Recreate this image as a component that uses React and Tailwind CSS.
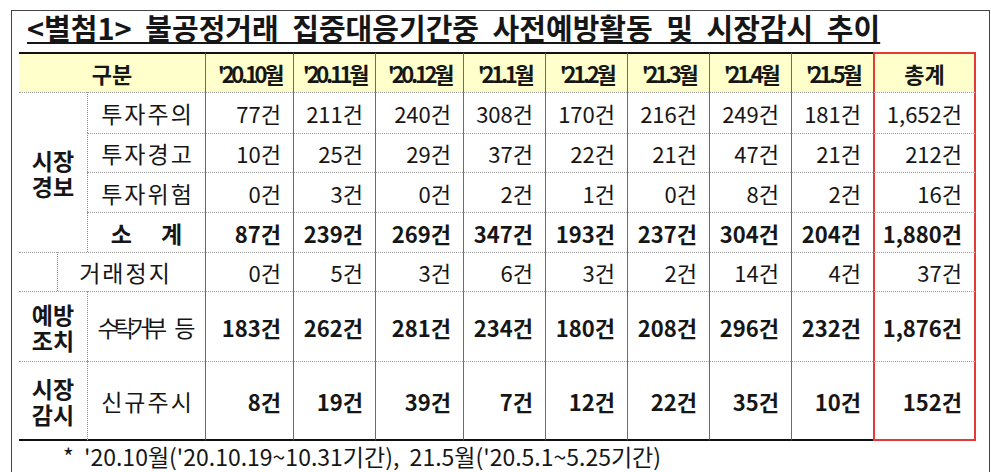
const rows = [
  ['77건', '211건', '240건', '308건', '170건', '216건', '249건', '181건', '1,652건'],
  ['10건', '25건', '29건', '37건', '22건', '21건', '47건', '21건', '212건'],
  ['0건', '3건', '0건', '2건', '1건', '0건', '8건', '2건', '16건'],
];
const subtotal = ['87건', '239건', '269건', '347건', '193건', '237건', '304건', '204건', '1,880건'];
const halt = ['0건', '5건', '3건', '6건', '3건', '2건', '14건', '4건', '37건'];
const prevent = ['183건', '262건', '281건', '234건', '180건', '208건', '296건', '232건', '1,876건'];
const watch = ['8건', '19건', '39건', '7건', '12건', '22건', '35건', '10건', '152건'];
const months = ["'20.10월", "'20.11월", "'20.12월", "'21.1월", "'21.2월", "'21.3월", "'21.4월", "'21.5월"];

const dotTop = 'border-t border-t-[#9a9a9a] [border-top-style:dotted]';
const dotLeft = 'border-l border-l-[#888] [border-left-style:dotted]';
const numCell = `text-right pr-[12px] border-l border-l-[#6b6b6b] ${dotTop}`;
const totalCell = `text-right pr-[12px] border-l-2 border-r-2 border-l-[#e53935] border-r-[#e53935] ${dotTop}`;
const numLast = `text-right pr-[12px] border-l border-l-[#6b6b6b] border-b-2 border-b-[#111] ${dotTop}`;
const totalLast = `text-right pr-[12px] border-l-2 border-r-2 border-b-2 border-l-[#e53935] border-r-[#e53935] border-b-[#e53935] ${dotTop}`;
const labelText = 'text-[23px] tracking-[2px] pl-[2px]';

function Values({ values, bold, last }) {
  return values.map((v, i) => {
    const isTotal = i === values.length - 1;
    let cls;
    if (last) cls = isTotal ? totalLast : numLast;
    else cls = isTotal ? totalCell : numCell;
    return (
      <td key={i} className={`${cls} ${bold ? 'font-bold' : ''}`}>
        {v}
      </td>
    );
  });
}

export default function App() {
  return (
    <div className="w-[991px] h-[472px] overflow-hidden bg-white text-[#161616] font-['Noto_Sans_CJK_KR',sans-serif]">
      <div className="ml-[11px] mt-[10px] w-[979px] h-[480px] border-l border-t border-r border-[#444]">
        <div className="pl-[15px] pt-[1px] text-[29px] leading-[31px] font-bold [word-spacing:7px]">
          <span className="underline decoration-2 underline-offset-[2px]">
            &lt;별첨1&gt; 불공정거래 집중대응기간중 사전예방활동 및 시장감시 추이
          </span>
        </div>

        <table className="ml-[7px] mt-[9px] w-[957px] table-fixed border-separate border-spacing-0 text-[22px] leading-[28px]">
          <colgroup>
            <col className="w-[38px]" />
            <col className="w-[30px]" />
            <col className="w-[118px]" />
            <col className="w-[88px]" />
            <col className="w-[82px]" />
            <col className="w-[88px]" />
            <col className="w-[82px]" />
            <col className="w-[82px]" />
            <col className="w-[82px]" />
            <col className="w-[82px]" />
            <col className="w-[82px]" />
            <col className="w-[103px]" />
          </colgroup>
          <tbody>
            <tr className="h-[40px] bg-[#ffffcc] font-bold">
              <td colSpan={3} className="text-center border-t-2 border-t-[#111]">구분</td>
              {months.map((m) => (
                <td key={m} className="text-center tracking-[-0.15em] border-t-2 border-t-[#111] border-l border-l-[#6b6b6b]">
                  {m}
                </td>
              ))}
              <td className="text-center border-t-2 border-l-2 border-r-2 border-[#e53935]">총계</td>
            </tr>

            {rows.map((r, idx) => (
              <tr key={idx} className={idx === 0 ? 'h-[41px]' : idx === 1 ? 'h-[39px]' : 'h-[40px]'}>
                {idx === 0 && (
                  <td rowSpan={4} colSpan={2} className={`text-center font-bold text-[23px] leading-[26px] ${dotTop}`}>
                    시장
                    <br />
                    경보
                  </td>
                )}
                <td className={`text-center ${labelText} ${dotLeft} ${dotTop}`}>
                  {['투자주의', '투자경고', '투자위험'][idx]}
                </td>
                <Values values={r} />
              </tr>
            ))}

            <tr className="h-[40px]">
              <td className={`text-center font-bold text-[23px] [word-spacing:24px] ${dotLeft} ${dotTop}`}>
                소 계
              </td>
              <Values values={subtotal} bold />
            </tr>

            <tr className="h-[39px]">
              <td className={dotTop}></td>
              <td colSpan={2} className={`text-center pr-[14px] ${labelText} ${dotLeft} ${dotTop}`}>
                거래정지
              </td>
              <Values values={halt} />
            </tr>

            <tr className="h-[70px]">
              <td colSpan={2} className={`text-center font-bold text-[23px] leading-[26px] ${dotTop}`}>
                예방
                <br />
                조치
              </td>
              <td className={`text-center text-[23px] ${dotLeft} ${dotTop}`}>
                <span className="tracking-[-5px]">수탁거부</span>
                <span className="ml-[12px]">등</span>
              </td>
              <Values values={prevent} bold />
            </tr>

            <tr className="h-[80px]">
              <td colSpan={2} className={`text-center font-bold text-[23px] leading-[26px] border-b-2 border-b-[#111] ${dotTop}`}>
                시장
                <br />
                감시
              </td>
              <td className={`text-center ${labelText} ${dotLeft} border-b-2 border-b-[#111] ${dotTop}`}>
                신규주시
              </td>
              <Values values={watch} bold last />
            </tr>
          </tbody>
        </table>

        <div className="pl-[51px] pt-[1px] text-[23px] leading-[28px]">
          *&nbsp;&nbsp;'20.10월('20.10.19~10.31기간),&nbsp;&nbsp;21.5월('20.5.1~5.25기간)
        </div>
      </div>
    </div>
  );
}
